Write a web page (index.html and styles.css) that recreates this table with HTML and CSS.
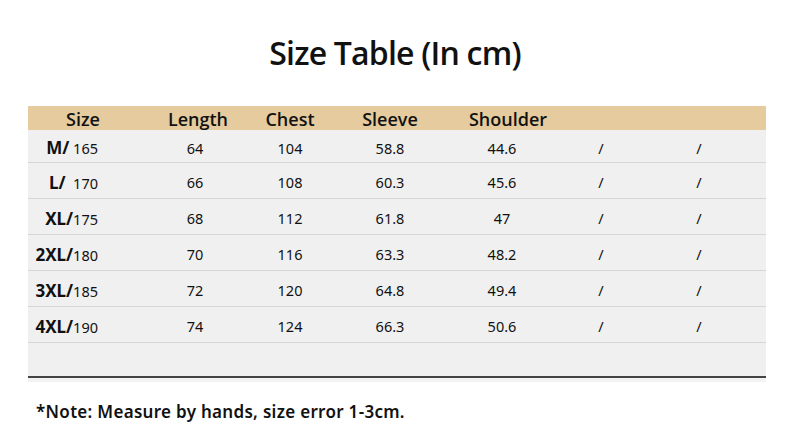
FILE: index.html
```html
<!DOCTYPE html>
<html>
<head>
<meta charset="utf-8">
<link rel="stylesheet" href="styles.css">
</head>
<body>
<main class="page">
  <h1 class="title">Size Table (In cm)</h1>
  <div class="table">
    <div class="row head">
      <div class="cell c-size">Size</div>
      <div class="cell c-len">Length</div>
      <div class="cell c-chest">Chest</div>
      <div class="cell c-sleeve">Sleeve</div>
      <div class="cell c-shoulder">Shoulder</div>
      <div class="cell"></div>
      <div class="cell"></div>
      <div class="cell"></div>
    </div>
    <div class="row first">
      <div class="cell size"><b>M/</b> 165</div>
      <div class="cell">64</div><div class="cell">104</div><div class="cell">58.8</div><div class="cell">44.6</div><div class="cell">/</div><div class="cell">/</div><div class="cell"></div>
    </div>
    <div class="row">
      <div class="cell size"><b>L/</b>&nbsp; 170</div>
      <div class="cell">66</div><div class="cell">108</div><div class="cell">60.3</div><div class="cell">45.6</div><div class="cell">/</div><div class="cell">/</div><div class="cell"></div>
    </div>
    <div class="row">
      <div class="cell size"><b>XL/</b>175</div>
      <div class="cell">68</div><div class="cell">112</div><div class="cell">61.8</div><div class="cell">47</div><div class="cell">/</div><div class="cell">/</div><div class="cell"></div>
    </div>
    <div class="row">
      <div class="cell size"><b>2XL/</b>180</div>
      <div class="cell">70</div><div class="cell">116</div><div class="cell">63.3</div><div class="cell">48.2</div><div class="cell">/</div><div class="cell">/</div><div class="cell"></div>
    </div>
    <div class="row">
      <div class="cell size"><b>3XL/</b>185</div>
      <div class="cell">72</div><div class="cell">120</div><div class="cell">64.8</div><div class="cell">49.4</div><div class="cell">/</div><div class="cell">/</div><div class="cell"></div>
    </div>
    <div class="row">
      <div class="cell size"><b>4XL/</b>190</div>
      <div class="cell">74</div><div class="cell">124</div><div class="cell">66.3</div><div class="cell">50.6</div><div class="cell">/</div><div class="cell">/</div><div class="cell"></div>
    </div>
    <div class="row empty"></div>
    <div class="tail"></div>
  </div>
  <p class="note">*Note: Measure by hands, size error 1-3cm.</p>
</main>
</body>
</html>
```
FILE: styles.css
```css
html, body {
  margin: 0;
  padding: 0;
  background: #ffffff;
}
.page {
  width: 790px;
  height: 444px;
  overflow: hidden;
  font-family: "Noto Sans", "Open Sans", sans-serif;
  color: #111111;
}
.title {
  margin: 33px 0 33px;
  height: 40px;
  line-height: 40px;
  text-align: center;
  font-family: "Open Sans", sans-serif;
  font-weight: 550;
  font-size: 32px;
  letter-spacing: -0.8px;
}
.table {
  margin-left: 28px;
  width: 738px;
  background: #f0f0f0;
}
.row {
  display: grid;
  grid-template-columns: 110px 114px 76px 124px 100px 98px 98px 18px;
  height: 35px;
  border-bottom: 1px solid #d6d6d6;
  align-items: center;
  font-size: 14.5px;
}
.row.first {
  height: 32px;
}
.row .cell {
  text-align: center;
  padding-top: 3px;
  white-space: nowrap;
}
.row .cell.size {
  text-align: right;
  padding-right: 40px;
  font-size: 14.5px;
}
.row .cell.size b {
  font-size: 17px;
  font-weight: 700;
}
.row.head {
  height: 24px;
  border-bottom: none;
  background: #e6cb9f;
  font-family: "Open Sans", sans-serif;
  font-weight: 600;
  font-size: 18px;
}
.row.head .cell {
  padding-top: 1px;
}
.row.head .c-len { padding-left: 6px; }
.row.head .c-shoulder { padding-left: 12px; }
.row.empty {
  height: 33px;
  border-bottom: 2px solid #444444;
}
.tail {
  height: 4px;
  background: #f3f3f3;
}
.note {
  margin: 18px 0 0 36px;
  line-height: 24px;
  font-size: 17px;
  font-weight: 600;
  letter-spacing: 0.3px;
}
```
